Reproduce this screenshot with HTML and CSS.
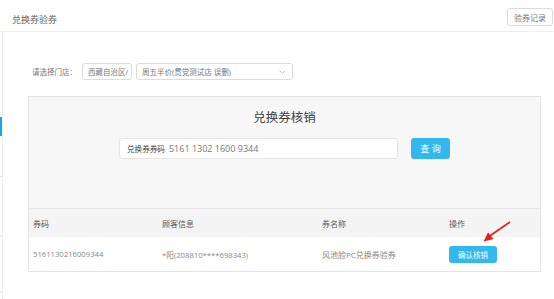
FILE: index.html
```html
<!DOCTYPE html>
<html lang="zh-CN">
<head>
<meta charset="utf-8">
<title>兑换券验券</title>
<link rel="stylesheet" href="styles.css">
</head>
<body>
<div class="topbar">
  <div class="page-title">兑换券验券</div>
  <button class="btn-record">验券记录</button>
</div>
<div class="layout">
  <aside class="side">
    <div class="side-item s1"></div>
    <div class="side-item active"></div>
    <div class="side-item s3"></div>
    <div class="side-item s4"></div>
    <div class="side-item s5"></div>
  </aside>
  <main class="main">
    <div class="store-row">
      <span class="store-label">请选择门店：</span>
      <div class="select sel-region"><span class="sel-text">西藏自治区/</span></div>
      <div class="select sel-store">
        <span class="sel-text">周五半价(贯党测试店 误删)</span>
        <svg class="chev" width="7" height="4" viewBox="0 0 7 4"><polyline points="0.5,0.5 3.5,3.5 6.5,0.5" fill="none" stroke="#b8b8b8" stroke-width="0.8"/></svg>
      </div>
    </div>

    <section class="panel">
      <div class="panel-top">
        <h2 class="panel-title">兑换券核销</h2>
        <div class="search-row">
          <div class="code-input">
            <span class="code-label">兑换券券码</span>
            <span class="code-value">5161 1302 1600 9344</span>
          </div>
          <button class="btn-query">查 询</button>
        </div>
      </div>
      <div class="table">
        <div class="trow thead">
          <div>券码</div>
          <div>顾客信息</div>
          <div>券名称</div>
          <div>操作</div>
        </div>
        <div class="trow tbody">
          <div class="num">5161130216009344</div>
          <div class="num">*阳(208810****698343)</div>
          <div>风池脸PC兑换券验券</div>
          <div><button class="btn-confirm">确认核销</button></div>
        </div>
      </div>
      <svg class="arrow" width="34" height="26" viewBox="0 0 34 26">
        <line x1="31" y1="2" x2="10" y2="16.5" stroke="#ec1c1c" stroke-width="1.7"/>
        <polygon points="4.5,21.5 9,12.5 14.5,19" fill="#ec1c1c"/>
      </svg>
    </section>
  </main>
</div>
</body>
</html>
```

FILE: styles.css
```css
* { box-sizing: border-box; }
html, body { margin: 0; padding: 0; background: #fff; }
body {
  width: 554px;
  height: 299px;
  overflow: hidden;
  font-family: "Open Sans", "Noto Sans CJK SC", sans-serif;
  color: #666;
}
button { font-family: inherit; cursor: pointer; }

.topbar {
  height: 32px;
  border-bottom: 1px solid #ededed;
  display: flex;
  justify-content: space-between;
  align-items: flex-start;
  padding: 0 1px 0 12px;
}
.page-title {
  font-size: 9px;
  line-height: 12px;
  margin-top: 14px;
  color: #666;
}
.btn-record {
  margin-top: 8px;
  height: 18px;
  width: 46px;
  padding: 0;
  font-size: 8px;
  color: #777;
  background: #fff;
  border: 1px solid #dcdcdc;
  border-radius: 3px;
}

.layout { display: flex; height: 267px; }
.side {
  width: 3px;
  border-right: 1px solid #eeeeee;
  display: flex;
  flex-direction: column;
}
.side-item { border-bottom: 1px solid #e6e6e6; }
.side-item.s1 { height: 85px; border-bottom: none; }
.side-item.active { height: 19px; background: #1aa6ef; border-bottom: none; }
.side-item.s3 { height: 41px; }
.side-item.s4 { height: 60px; }
.side-item.s5 { height: 55px; }

.main { flex: 1; padding: 31px 0 0 25px; }

.store-row {
  display: flex;
  align-items: center;
  gap: 4px;
  padding-left: 4px;
  height: 17px;
  font-size: 7.5px;
}
.store-label { color: #777; margin-right: 1px; }
.select {
  height: 17px;
  border: 1px solid #dcdcdc;
  border-radius: 3px;
  display: flex;
  align-items: center;
  padding-left: 5px;
  overflow: hidden;
  white-space: nowrap;
  color: #777;
  background: #fff;
}
.sel-region { width: 50px; }
.sel-store { width: 157px; justify-content: space-between; padding-right: 6px; }
.chev { flex: none; }

.panel {
  position: relative;
  margin-top: 16px;
  width: 513px;
  border: 1px solid #e3e3e3;
  background: #fff;
}
.panel-top {
  background: #f7f7f7;
  height: 111px;
  padding-top: 13px;
}
.panel-title {
  margin: 0;
  text-align: center;
  font-weight: normal;
  font-size: 12.5px;
  line-height: 16px;
  color: #444;
}
.search-row {
  margin-top: 12px;
  display: flex;
  justify-content: center;
  gap: 13px;
}
.code-input {
  width: 279px;
  height: 21px;
  background: #fff;
  border: 1px solid #e6e6e6;
  border-radius: 3px;
  display: flex;
  align-items: center;
  padding-left: 7px;
  font-size: 9px;
  gap: 4px;
}
.code-label { color: #444; font-size: 7.6px; }
.code-value { color: #777; }
.btn-query {
  width: 39px;
  height: 21px;
  border: none;
  border-radius: 3px;
  background: #33b7ef;
  color: #fff;
  font-size: 9px;
  padding: 0;
}

.table { font-size: 8px; }
.trow {
  display: grid;
  grid-template-columns: 129px 160px 127px 1fr;
  padding-left: 4px;
  align-items: center;
}
.thead {
  height: 29px;
  border-top: 1px solid #e6e6e6;
  background: #f4f4f4;
  color: #5a5a5a;
}
.tbody {
  height: 34px;
  color: #888;
}
.num { font-size: 7.7px; }
.btn-confirm {
  width: 48px;
  height: 17px;
  border: none;
  border-radius: 3px;
  background: #33b7ef;
  color: #fff;
  font-size: 7.5px;
  padding: 0;
}

.arrow {
  position: absolute;
  left: 450px;
  top: 123px;
}
```
